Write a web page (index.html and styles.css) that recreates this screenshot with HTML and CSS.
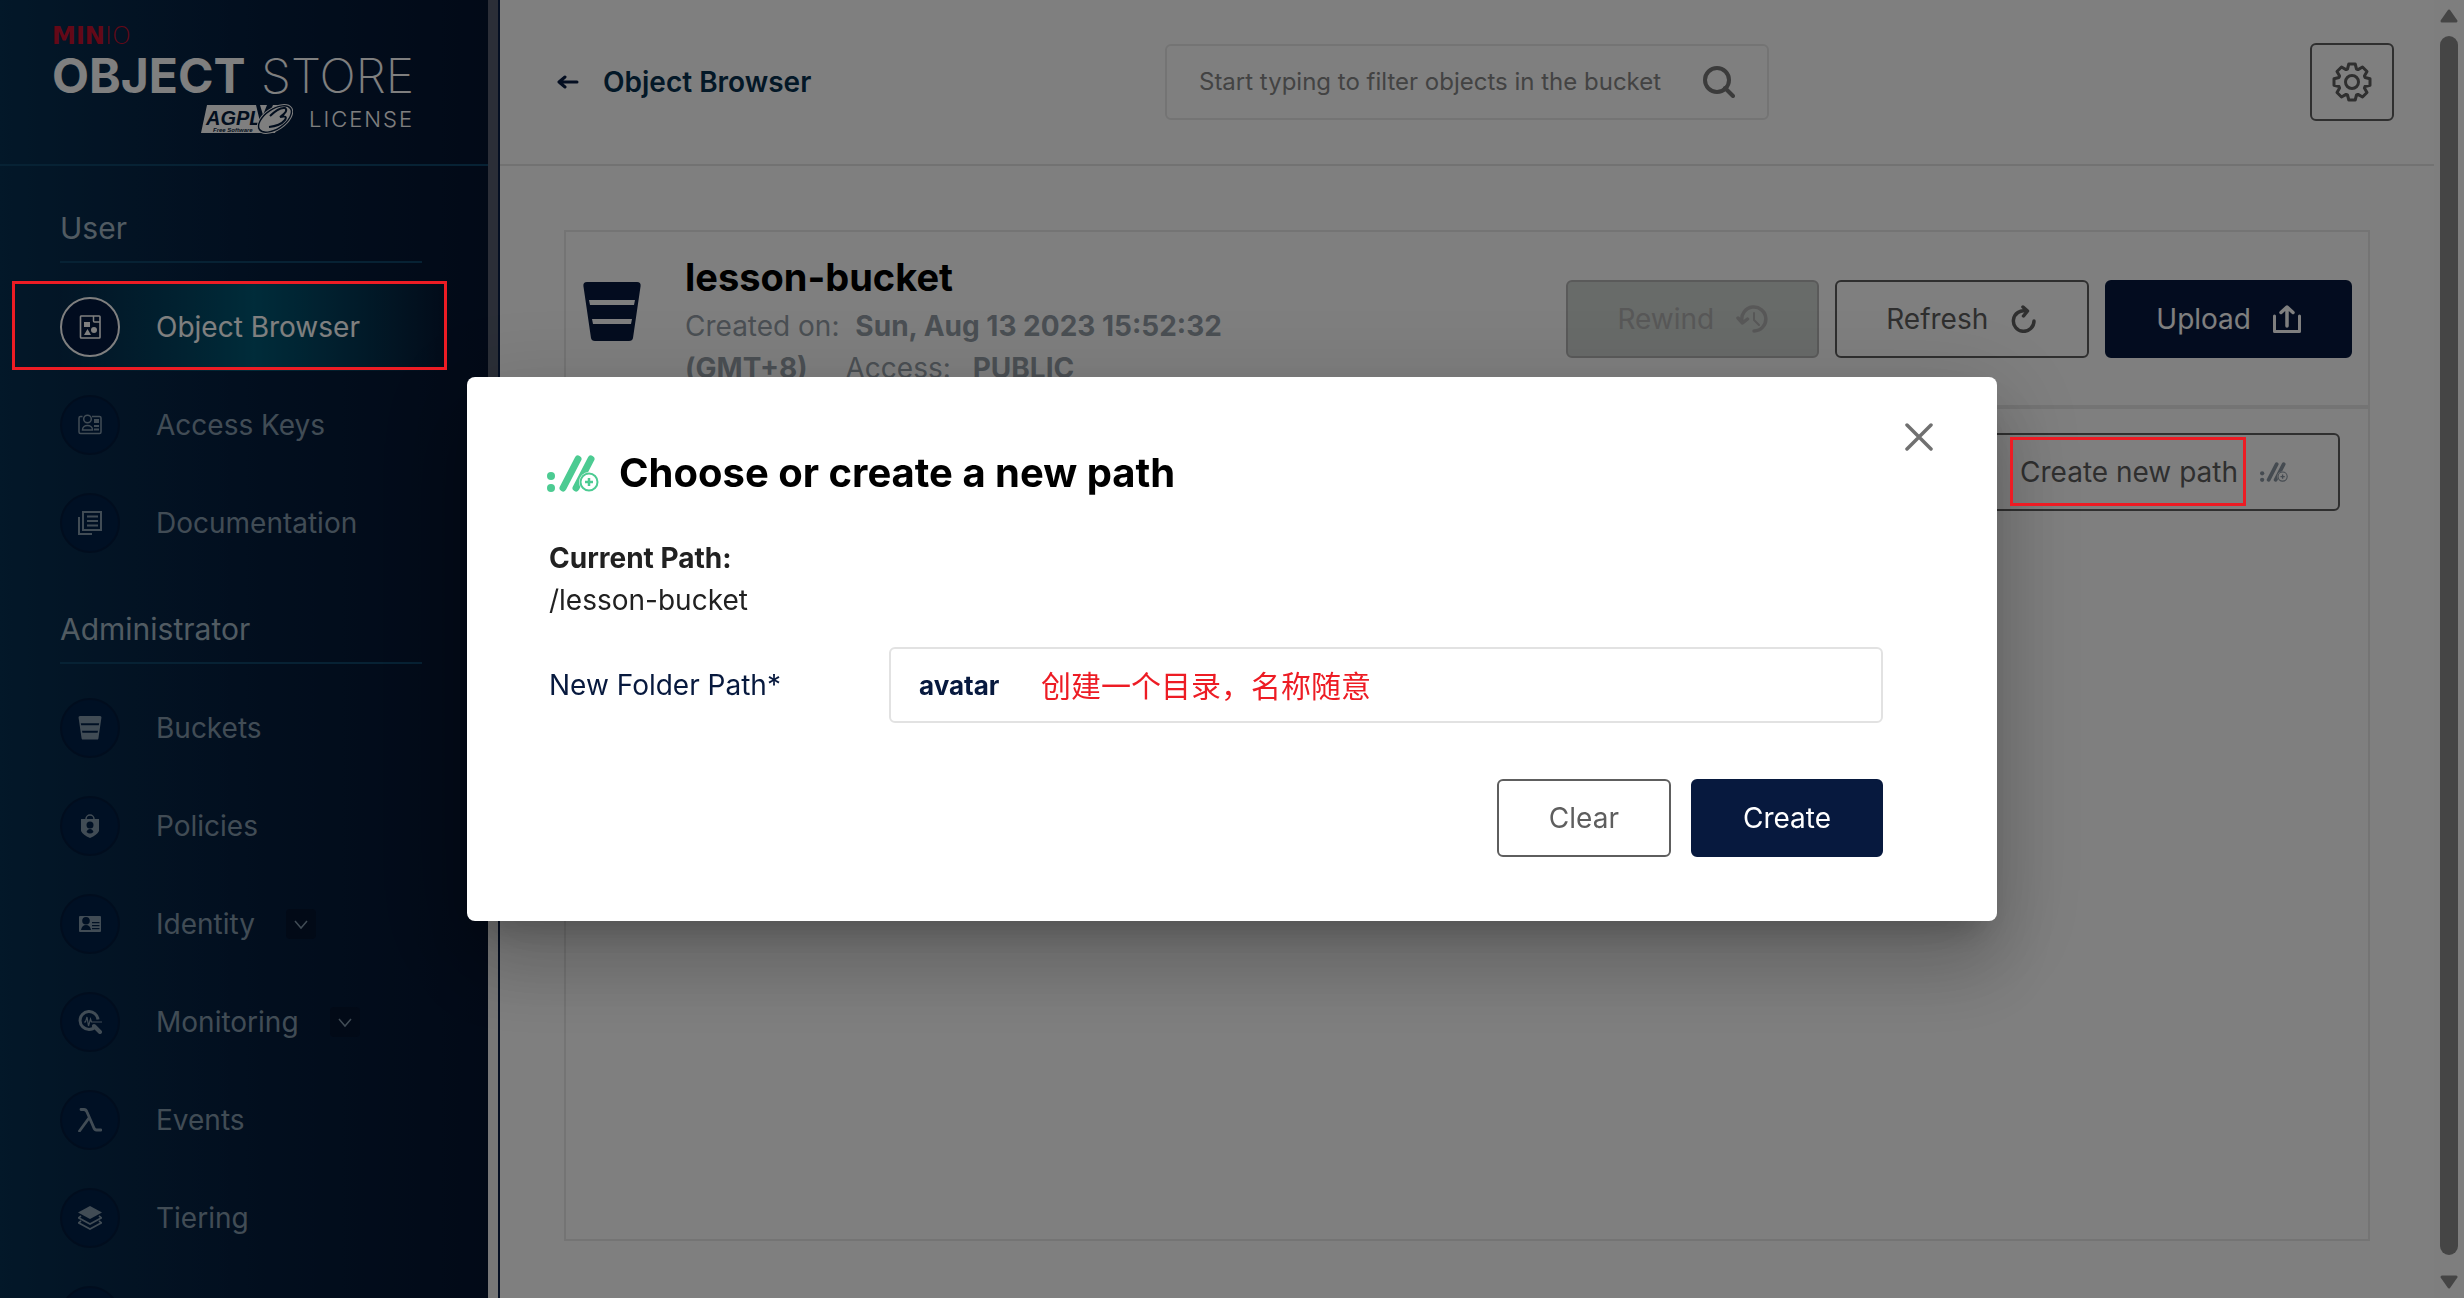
FILE: index.html
```html
<!DOCTYPE html>
<html lang="en">
<head>
<meta charset="utf-8">
<title>MinIO Console</title>
<link rel="stylesheet" href="styles.css">
</head>
<body>
<svg class="sprite" aria-hidden="true">
  <symbol id="i-path" viewBox="0 0 52 37">
    <circle cx="4" cy="21" r="4"/><circle cx="4" cy="33" r="4"/>
    <path d="M16 33 31 4M29 33 44 4" fill="none" stroke="currentColor" stroke-width="7" stroke-linecap="round"/>
    <circle cx="42" cy="27" r="9" fill="#fff" stroke="#fff" stroke-width="2"/>
    <circle cx="42" cy="27" r="8.500" fill="none" stroke="currentColor" stroke-width="2"/>
    <path d="M42 23v8M38 27h8" stroke="currentColor" stroke-width="2.500"/>
  </symbol>
  <symbol id="i-bucket" viewBox="0 0 60 60">
    <path fill-rule="evenodd" d="M5 0h50q4 0 3.600 4L51 56q-.5 3-4 3H13q-3.500 0-4-3L1.400 4Q1 0 5 0ZM7 18l1 5h44l1-5ZM10 37l1 5h38l1-5Z"/>
  </symbol>
  <symbol id="i-down" viewBox="0 0 30 30"><path d="m9 12 6 7 6-7" fill="none" stroke="currentColor" stroke-width="1.500"/></symbol>
</svg>

<div class="app">
  <aside class="sidebar">
    <div class="menu">
      <div class="brand">
        <div class="logo">
          <div class="logo-top"><b>MIN</b><span>IO</span></div>
          <div class="logo-main"><b>OBJECT</b><span>STORE</span></div>
          <div class="logo-sub">
            <svg width="92" height="30" viewBox="0 0 92 30" role="img" aria-label="AGPL v3">
              <path d="M6 1H84L74 29H0Z" fill="#fff"/>
              <text x="5" y="21" class="agpl">AGPL</text>
              <text x="12" y="28" class="agpl-note">Free Software</text>
              <path d="M55 1 61 26 72 1 66 1 62 11 59 1Z" fill="#051c3c"/>
              <ellipse cx="74" cy="15" rx="19" ry="10" transform="rotate(-34 74 15)" fill="#fff" stroke="#051c3c" stroke-width="2"/>
              <ellipse cx="74" cy="15" rx="20" ry="11" transform="rotate(-34 74 15)" fill="none" stroke="#fff" stroke-width="1"/>
              <path d="M69 12Q78 3 84 4 88 7 79 13 87 11 84 16 79 22 68 23" fill="none" stroke="#051c3c" stroke-width="2"/>
            </svg>
            <span>LICENSE</span>
          </div>
        </div>
      </div>
      <nav>
        <h2 class="group-title">User</h2>
        <ul class="group">
          <li><a class="item active" href="#"><span class="dot"><svg viewBox="0 0 24 24"><path d="M3 1h18.200q.8 0 .8.800V22.200q0 .8-.8.800H3.300q-.8 0-.8-.8V1.800Q2.500 1 3 1Z" fill="none" stroke="currentColor" stroke-width="1.600"/><path d="M15.500 1v5q0 1 1 1H22" fill="none" stroke="currentColor" stroke-width="1.500"/><path d="M6 7h6v5H6ZM6 20l3.500-6 3.500 6Z"/><circle cx="16" cy="15" r="3"/></svg></span>Object Browser</a><span class="mark mark-row"></span></li>
          <li><a class="item" href="#"><span class="dot"><svg viewBox="0 0 24 24"><path d="M4.500 3.500h-2A1.500 1.500 0 0 0 1 5v14a1.500 1.500 0 0 0 1.500 1.500h19A1.500 1.500 0 0 0 23 19V5a1.500 1.500 0 0 0-1.500-1.500H14" fill="none" stroke="currentColor" stroke-width="1.500"/><circle cx="9.500" cy="6" r="3.800" fill="none" stroke="currentColor" stroke-width="1.500"/><path d="M4.500 17c0-6 10-6 10 0Z" fill="none" stroke="currentColor" stroke-width="1.500"/><path d="M16 6h5v4h-5ZM16 12h5v2h-5ZM16 15.500h5v2h-5Z"/></svg></span>Access Keys</a></li>
          <li><a class="item" href="#"><span class="dot"><svg viewBox="0 0 24 24"><path d="M5 1h18v18H5Z" fill="none" stroke="currentColor" stroke-width="2"/><path d="M9 5.500h11M9 10h11M9 14.500h11M1 6v17h13" fill="none" stroke="currentColor" stroke-width="2"/></svg></span>Documentation</a></li>
        </ul>
        <h2 class="group-title">Administrator</h2>
        <ul class="group">
          <li><a class="item" href="#"><span class="dot"><svg viewBox="0 0 60 60"><use href="#i-bucket"/></svg></span>Buckets</a></li>
          <li><a class="item" href="#"><span class="dot"><svg viewBox="0 0 24 24"><path fill-rule="evenodd" d="M3 5h18v12q-2 4-9 7-7-3-9-7ZM12 7.500a3.500 3.500 0 1 0 0 7 3.500 3.500 0 0 0 0-7ZM8.500 18q3.500 3 7 0-1-3-3.500-3t-3.500 3Z"/><path d="M8 5a4 4 0 0 1 8 0" fill="none" stroke="currentColor" stroke-width="1.500"/></svg></span>Policies</a></li>
          <li><a class="item" href="#"><span class="dot"><svg viewBox="0 0 24 24"><path fill-rule="evenodd" d="M2 4h20q1 0 1 1v14q0 1-1 1H2q-1 0-1-1V5q0-1 1-1ZM8 5a3.700 3.700 0 1 0 0 7.600A3.700 3.700 0 0 0 8 5ZM3 18h10q-1-5-5-5t-5 5ZM14 10v1.300h7.500V10ZM14 13v1.300h7.500V13ZM14 16v1.300h7.500V16Z"/></svg></span>Identity<span class="more"><svg width="30" height="30"><use href="#i-down"/></svg></span></a></li>
          <li><a class="item" href="#"><span class="dot"><svg viewBox="0 0 24 24"><path d="M20 9.500A9 9 0 1 0 11 19.500q4 0 6.500-3" fill="none" stroke="currentColor" stroke-width="3"/><path d="m16 16 6 6" stroke="currentColor" stroke-width="4" stroke-linecap="round"/><path d="M6 12h1.500L9 7l1.500 9L12.500 9l1 3H24" fill="none" stroke="currentColor" stroke-width="1.200"/></svg></span>Monitoring<span class="more"><svg width="30" height="30"><use href="#i-down"/></svg></span></a></li>
          <li><a class="item" href="#"><span class="dot"><svg viewBox="0 0 24 24"><path d="M3 1.500h3q2 0 3 2.500l6.500 15q1 3 3 3H23M11 10 1.500 23" fill="none" stroke="currentColor" stroke-width="2.800" stroke-linecap="round"/></svg></span>Events</a></li>
          <li><a class="item" href="#"><span class="dot"><svg viewBox="0 0 24 24"><path d="M12 0 24 6.500 12 13 0 6.500Z"/><path d="m3 10-2.500 1.800L12 18l11.500-6.200L21 10M3 15l-2.500 1.800L12 23l11.500-6.200L21 15" fill="none" stroke="currentColor" stroke-width="1.600"/></svg></span>Tiering</a></li>
          <li><a class="item" href="#"><span class="dot"></span></a></li>
        </ul>
      </nav>
    </div>
    <div class="menu-scroll"><div class="menu-thumb"></div></div>
  </aside>

  <main class="main">
    <header class="topbar">
      <a class="back" href="#">
        <svg width="22" height="14" viewBox="0 0 22 14"><path d="M8 2 2 7l6 5M2 7h18" fill="none" stroke="#081c42" stroke-width="3" stroke-linecap="round" stroke-linejoin="round"/></svg>
        Object Browser
      </a>
      <label class="search">
        <input type="text" aria-label="Filter objects" placeholder="Start typing to filter objects in the bucket">
        <svg width="32" height="32" viewBox="0 0 32 32"><circle cx="14" cy="14" r="12" fill="none" stroke="currentColor" stroke-width="4"/><path d="m22 22 8 8" stroke="currentColor" stroke-width="4" stroke-linecap="round"/></svg>
      </label>
      <button class="btn gear" type="button" aria-label="Settings">
        <svg width="40" height="40" viewBox="-20 -20 40 40" fill="none" stroke="currentColor" stroke-width="3" stroke-linejoin="round"><circle r="6.500"/><path d="M-4.500-13-3.200-18H3.200L4.500-13 6-12.400 10.500-15 15-10.500 12.400-6 13-4.500 18-3.200V3.200L13 4.500 12.400 6 15 10.500 10.500 15 6 12.400 4.500 13 3.200 18H-3.200L-4.500 13-6 12.400-10.500 15-15 10.500-12.400 6-13 4.500-18 3.200V-3.200L-13-4.500-12.400-6-15-10.500-10.500-15-6-12.400Z"/></svg>
      </button>
    </header>

    <section class="panel">
      <div class="panel-head">
        <svg class="bucket" width="60" height="60"><use href="#i-bucket"/></svg>
        <div class="info">
          <h1>lesson-bucket</h1>
          <p>Created on: <b class="date">Sun, Aug 13 2023 15:52:32 (GMT+8)</b> <span class="access">Access:</span> <b>PUBLIC</b></p>
        </div>
        <div class="actions">
          <button class="btn" type="button" disabled>Rewind
            <svg width="32" height="28" viewBox="0 0 32 28" fill="none" stroke="currentColor" stroke-linecap="round" stroke-linejoin="round"><path d="M6 16A12 12 0 1 1 18 26" stroke-width="3.500"/><path d="m2 13 4.500 5 5-4" stroke-width="3.500"/><path d="M18 8v7l5 5" stroke-width="2"/></svg>
          </button>
          <button class="btn" type="button">Refresh
            <svg width="28" height="28" viewBox="0 0 28 28" fill="none" stroke="currentColor" stroke-width="3.500" stroke-linecap="round" stroke-linejoin="round"><path d="M24 16A10.300 10.300 0 1 1 16 6"/><path d="m13 2 4.500 4-4 5"/></svg>
          </button>
          <button class="btn primary" type="button">Upload
            <svg width="28" height="28" viewBox="0 0 28 28" fill="none" stroke="currentColor" stroke-width="3" stroke-linecap="round" stroke-linejoin="round"><path d="M1.500 11v15.500h25V11"/><path d="M14 21V3M8 7.500 14 2l6 5.500" stroke-width="3.500"/></svg>
          </button>
        </div>
      </div>
      <div class="toolbar">
        <button class="btn newpath" type="button"><span class="newpath-label">Create new path<span class="mark mark-path"></span></span>
          <svg class="newpath-icon" width="28" height="20"><use href="#i-path"/></svg>
        </button>
      </div>
    </section>
  </main>

  <div class="page-scroll">
    <svg width="18" height="14" viewBox="0 0 18 14"><path d="M9 2 16 12H2Z" stroke="currentColor" stroke-width="3" stroke-linejoin="round"/></svg>
    <div class="page-thumb"></div>
    <svg width="18" height="14" viewBox="0 0 18 14"><path d="M9 12 16 2H2Z" stroke="currentColor" stroke-width="3" stroke-linejoin="round"/></svg>
  </div>
</div>

<div class="overlay">
  <form class="modal" role="dialog" aria-labelledby="modal-title">
    <button class="close" type="button" aria-label="Close"><svg width="28" height="28" viewBox="0 0 28 28"><path d="m2 2 24 24M26 2 2 26" stroke="currentColor" stroke-width="3.500" stroke-linecap="round"/></svg></button>
    <h2 class="modal-title" id="modal-title"><svg width="52" height="37"><use href="#i-path"/></svg>Choose or create a new path</h2>
    <p class="current"><b>Current Path:</b><br>/lesson-bucket</p>
    <div class="field">
      <label for="folder">New Folder Path*</label>
      <div class="field-box">
        <input id="folder" type="text" value="avatar">
        <span class="note" lang="zh-CN">创建一个目录，名称随意</span>
      </div>
    </div>
    <div class="modal-actions">
      <button class="btn" type="button">Clear</button>
      <button class="btn primary" type="submit">Create</button>
    </div>
  </form>
</div>
</body>
</html>
```
FILE: styles.css
```css
* { box-sizing: border-box; }

body {
  margin: 0;
  background: #fff;
  color: #212121;
  font: 28px/42px Inter, "Noto Sans", sans-serif;
  overflow: hidden;
}

h1, h2, p, ul { margin: 0; padding: 0; }
ul { list-style: none; }
a { color: inherit; text-decoration: none; }
svg { display: block; flex: none; }
svg:not([fill]) { fill: currentColor; }
.sprite { position: absolute; width: 0; height: 0; }

.app {
  display: grid;
  grid-template-columns: 500px 1fr 30px;
  height: 100vh;
}

/* Sidebar */
.sidebar {
  display: flex;
  height: 100vh;
  overflow: hidden;
  border-right: 2px solid #081c42;
}
.menu {
  flex: 1;
  background: linear-gradient(90deg, #073052 0%, #051e3e 50%, #05142f 100%);
}
.brand {
  height: 166px;
  padding: 24px 0 0 52px;
  border-bottom: 2px solid #0e4468;
  color: #fff;
}
.logo { width: 362px; }
.logo-top {
  color: #c8102e;
  font: 200 24px/24px "DejaVu Sans", sans-serif;
}
.logo-top b { font-weight: 700; }
.logo-main {
  display: flex;
  justify-content: space-between;
  font-size: 48px;
  font-weight: 200;
  line-height: 56px;
}
.logo-main b { font-weight: 700; }
.logo-sub {
  display: flex;
  justify-content: flex-end;
  align-items: center;
  gap: 16px;
  font-size: 22px;
  font-weight: 300;
  line-height: 30px;
  letter-spacing: 2px;
}
.agpl { font: italic 700 20px "Liberation Sans", sans-serif; letter-spacing: 0; fill: #051c3c; }
.agpl-note { font: italic 700 6px "Liberation Sans", sans-serif; letter-spacing: 0; fill: #051c3c; }

.group-title {
  margin: 45px 66px 20px 60px;
  padding-bottom: 16px;
  border-bottom: 2px solid #0e4468;
  color: #a3b7c4;
  font-size: 30px;
  font-weight: 400;
  line-height: 34px;
}
.group { display: grid; gap: 10px; }
.group li { position: relative; }
.item {
  display: flex;
  align-items: center;
  height: 88px;
  padding-left: 60px;
  color: #8399ab;
}
.item.active {
  color: #fff;
  background: linear-gradient(90deg, rgba(0, 88, 116, 0) 12%, #005874 52%, rgba(0, 88, 116, 0) 92%);
}
.dot {
  display: grid;
  place-items: center;
  width: 60px;
  height: 60px;
  margin-right: 36px;
  border: 2px solid #031b3c;
  border-radius: 50%;
  background: #002048;
}
.dot svg { width: 24px; height: 24px; }
.active .dot { border-color: #fff; background: #02193f; }
.more {
  margin-left: 31px;
  border-radius: 4px;
  background: #04142f;
}

.menu-scroll { width: 10px; background: #eee; }
.menu-thumb { height: 60%; background: #565d6e; }

/* Red callouts drawn over the screen */
.mark {
  position: absolute;
  z-index: 20;
  border: 3px solid #ed1c24;
  pointer-events: none;
}
.mark-row { inset: -2px 41px 1px 12px; }
.mark-path { inset: -14px -8px -13px -10px; }

/* Main column */
.main {
  display: flex;
  flex-direction: column;
  min-width: 0;
}
.topbar {
  display: grid;
  grid-template-columns: 1fr 604px 1fr;
  align-items: center;
  height: 166px;
  padding: 0 40px;
  border-bottom: 2px solid #e5e5e5;
}
.back {
  display: flex;
  align-items: center;
  gap: 24px;
  padding-left: 17px;
  color: #07304f;
  font-weight: 600;
}
.search {
  display: flex;
  align-items: center;
  height: 76px;
  padding: 0 32px;
  border: 2px solid #e8e8e8;
  border-radius: 6px;
  color: #777;
}
.search input {
  flex: 1;
  min-width: 0;
  padding: 0;
  border: 0;
  outline: 0;
  background: none;
  font: 24px/32px Inter, sans-serif;
}
.search input::placeholder { color: #868686; opacity: 1; }

.btn {
  display: inline-flex;
  align-items: center;
  justify-content: center;
  height: 78px;
  padding: 0 50px;
  border: 2px solid #5e5e5e;
  border-radius: 6px;
  background: #fff;
  color: #5e5e5e;
  font: 28px/32px Inter, sans-serif;
}
.btn svg { margin-left: 22px; }
.btn.primary { border-color: #07193e; background: #07193e; color: #fff; }
.btn:disabled { border-color: #b4b4b4; background: #d1d6d3; color: #b0b0b0; }
.btn.gear { justify-self: end; width: 84px; padding: 0; }
.btn.gear svg { margin: 0; }

.panel {
  flex: 1;
  margin: 64px 64px 57px;
  border: 2px solid #e8e8e8;
}
.panel-head {
  display: flex;
  align-items: center;
  height: 177px;
  padding: 0 16px;
  border-bottom: 4px solid #e8e8e8;
}
.bucket { margin: 0 43px 14px 0; color: #07193e; }
.info { width: 570px; color: #969fa8; }
.info h1 {
  color: #000;
  font-size: 38px;
  font-weight: 700;
  line-height: 56px;
}
.date { margin: 0 30px 0 8px; }
.access { margin-right: 14px; }
.actions { display: flex; gap: 16px; margin-left: auto; }
.actions .btn { padding: 0 49px; }
.toolbar {
  display: flex;
  justify-content: flex-end;
  padding: 24px 28px;
}
.newpath-label { position: relative; padding: 5px 0; }
.newpath-icon { color: #8b97a3; }

.page-scroll {
  display: flex;
  flex-direction: column;
  align-items: center;
  gap: 13px;
  padding: 9px 0;
  background: #fcfcfc;
  color: #8b8b8b;
}
.page-thumb {
  flex: 1;
  width: 18px;
  margin-bottom: 7px;
  border-radius: 9px;
  background: #8b8b8b;
}

/* Dialog */
.overlay {
  position: fixed;
  inset: 0;
  z-index: 10;
  display: flex;
  align-items: center;
  justify-content: center;
  background: rgba(0, 0, 0, .5);
}
.modal {
  position: relative;
  width: 1530px;
  max-width: 90%;
  padding: 68px 114px 64px 82px;
  border-radius: 8px;
  background: #fff;
  box-shadow: 0 22px 30px -14px rgba(0, 0, 0, .2), 0 48px 76px 6px rgba(0, 0, 0, .14), 0 18px 92px 16px rgba(0, 0, 0, .12);
}
.close {
  position: absolute;
  top: 46px;
  right: 64px;
  padding: 0;
  border: 0;
  background: none;
  color: #707070;
}
.modal-title {
  display: flex;
  align-items: center;
  gap: 20px;
  margin-left: -2px;
  color: #000;
  font-size: 40px;
  line-height: 56px;
}
.modal-title svg { color: #4ccb92; }
.current { margin-top: 36px; }
.field {
  display: flex;
  align-items: center;
  margin-top: 26px;
  color: #07193e;
}
.field label { width: 340px; }
.field-box { position: relative; flex: 1; display: flex; }
.field-box input {
  flex: 1;
  height: 76px;
  padding: 0 28px;
  border: 2px solid #e2e2e2;
  border-radius: 6px;
  color: #07193e;
  font: 700 26px/32px Inter, sans-serif;
}
.note {
  position: absolute;
  top: 15px;
  left: 152px;
  color: #ed1c24;
  font: 30px/44px "Noto Sans CJK SC", sans-serif;
}
.modal-actions {
  display: flex;
  justify-content: flex-end;
  gap: 20px;
  margin-top: 56px;
}
```
